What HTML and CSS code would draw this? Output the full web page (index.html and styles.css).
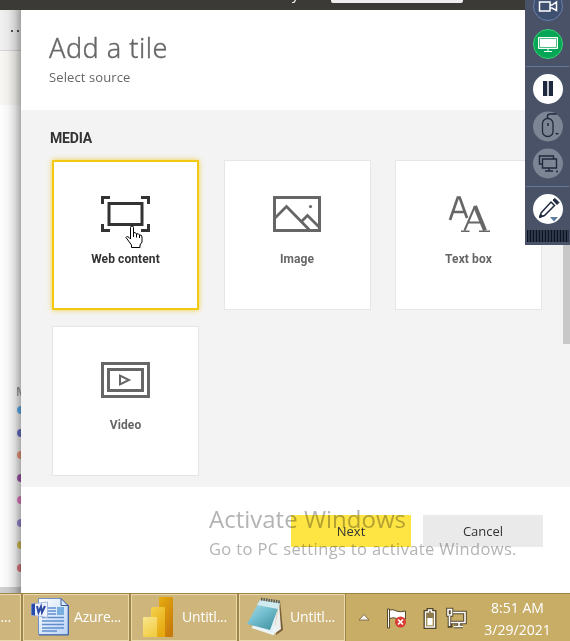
FILE: index.html
```html
<!DOCTYPE html>
<html lang="en">
<head>
<meta charset="utf-8">
<title>Add a tile</title>
<link rel="stylesheet" href="styles.css">
</head>
<body>
<div class="screen">
  <header class="topbar"><span class="topbar-text">y</span><div class="topbar-search"></div></header>
  <div class="workspace">
    <aside class="backdrop">
      <div class="backdrop-menu"><i></i><i></i></div>
      <div class="backdrop-band"></div>
      <div class="backdrop-page">
        <span class="legend-title">M</span>
        <i class="dot blue"></i><i class="dot indigo"></i><i class="dot orange"></i><i class="dot purple"></i>
        <i class="dot pink"></i><i class="dot violet"></i><i class="dot olive"></i><i class="dot red"></i>
      </div>
      <div class="backdrop-foot"></div>
    </aside>
    <main class="panel">
      <div class="panel-head">
        <h1>Add a tile</h1>
        <p>Select source</p>
      </div>
      <div class="panel-body">
        <h2>MEDIA</h2>
        <div class="tiles">
          <div class="tile selected">
            <svg width="49" height="36" viewBox="0 0 49 36" fill="none" stroke="currentColor" stroke-width="3"><path d="M1.500 8V1.500H9M40 1.500h7.500V8M1.500 28v6.500H9M40 34.500h7.500V28"/><rect x="8" y="7.500" width="33" height="21"/></svg>
            <span>Web content</span>
          </div>
          <div class="tile">
            <svg width="48" height="36" viewBox="0 0 48 36" fill="none" stroke="currentColor" stroke-width="3"><rect x="1.500" y="1.500" width="45" height="33"/><path d="M2 22 13.500 10.500 36.500 34M28.500 25.500 34.500 19.500 46 31" stroke-width="2.700"/><circle cx="37.500" cy="10.500" r="1.600" fill="currentColor" stroke="none"/></svg>
            <span>Image</span>
          </div>
          <div class="tile">
            <svg width="48" height="36" viewBox="0 0 48 36" fill="none" stroke="currentColor"><path d="M5 24 12.800 1.500h1.900L22 22M8 16h11.500" stroke-width="2.700"/><path d="M19.500 34.500 30 10M23 26.500H36" stroke-width="2"/><path d="M30 10 40 34.500" stroke-width="4"/><path d="M16 35.200h8.500M34 35.200h11" stroke-width="1.600"/></svg>
            <span>Text box</span>
          </div>
          <div class="tile">
            <svg width="49" height="36" viewBox="0 0 49 36" fill="none" stroke="currentColor" stroke-width="3"><rect x="1.500" y="1.500" width="46" height="33"/><rect x="7.500" y="7.500" width="34" height="21"/><path d="M19 13.500v9L28 18z" stroke-width="2"/></svg>
            <span>Video</span>
          </div>
        </div>
      </div>
      <div class="panel-foot">
        <button class="btn primary">Next</button>
        <button class="btn">Cancel</button>
      </div>
      <div class="scroll-thumb"></div>
    </main>
  </div>
  <footer class="taskbar">
    <div class="task cut"><span>o...</span></div>
    <div class="task">
      <svg width="40" height="40" viewBox="0 0 40 40"><defs><linearGradient id="pg" x2="1" y2="1"><stop stop-color="#fff"/><stop offset="1" stop-color="#b9d3f6"/></linearGradient></defs><path d="M8.500 1.500H31l7 7v29H8.500z" fill="url(#pg)" stroke="#6f8fc8"/><path d="M38.500 8v30H9" fill="none" stroke="#4264a8"/><path d="M31 1.500v7h7z" fill="#dbe8fb" stroke="#3c5c98"/><path d="M18 11h8M18 14h8M18 17h8M12 20.500h22M12 24h22M12 27.500h22M12 31h22M12 34h15" stroke="#5f8dce" stroke-width="1.300"/><rect x="27" y="10" width="7" height="8" fill="#79afe0"/><path d="m1.500 7 16-2v15.500L1.500 18z" fill="#eef3fd" stroke="#a9b9dc"/><path d="M1.500 7 5 6.500v12L1.500 18z" fill="#284bab"/><path d="m7 9 1.500 6.500 2.500-6 1 6L15 9" fill="none" stroke="#2e4ba3" stroke-width="2"/></svg>
      <span>Azure...</span>
    </div>
    <div class="task">
      <svg width="40" height="40" viewBox="0 0 40 40"><defs><linearGradient id="b1" x2=".6" y2="1"><stop stop-color="#e6ad10"/><stop offset="1" stop-color="#c87b0c"/></linearGradient><linearGradient id="b2" x2=".6" y2="1"><stop stop-color="#f5d24e"/><stop offset="1" stop-color="#e6a90f"/></linearGradient><linearGradient id="b3" x2=".5" y2="1"><stop stop-color="#f9e68c"/><stop offset="1" stop-color="#f2ce48"/></linearGradient></defs><rect x="21" width="14" height="40" rx="1" fill="url(#b1)"/><path d="M14 10h12q1 0 1 1v29H13V11z" fill="url(#b2)"/><rect x="5" y="20" width="14" height="20" rx="1" fill="url(#b3)"/></svg>
      <span>Untitl...</span>
    </div>
    <div class="task">
      <svg width="40" height="40" viewBox="0 0 40 40"><defs><linearGradient id="nt" x2=".8" y2="1"><stop stop-color="#b5e1e8"/><stop offset=".5" stop-color="#75bfd0"/><stop offset="1" stop-color="#3f929f"/></linearGradient></defs><path d="m34 4 3 29-7 5z" fill="#775d35"/><path d="m33 5 2 27-7 5z" fill="#eee"/><path d="m26 14 6-7-4 30-22-7z" fill="#e4f0f4"/><path d="M14 3 34 6 24 33 1 27z" fill="url(#nt)"/><path d="m14 3 20 3-2 6-21-4z" fill="#d0eaf0"/><path d="m15 2 19 3" stroke="#515b5e" stroke-width="3" stroke-dasharray="1.500 1"/><path d="m6 30 21 7 3-8" fill="none" stroke="#edf6f7" stroke-width="2"/></svg>
      <span>Untitl...</span>
    </div>
    <div class="tray">
      <svg width="110" height="26" viewBox="0 0 110 26">
        <path d="M2 16 7 10.500 12 16z" fill="#f5f2e9" stroke="#6e603d" stroke-width=".8"/>
        <g fill="#fff" stroke="#54462a" stroke-width="1"><path d="M30.500 5h2v19h-2z"/><path d="M32.500 6q4-1 7 1 3 1.500 9 0v8q-5 2-9-.5-3-1.500-7 0z"/></g>
        <circle cx="43.500" cy="18" r="5.500" fill="#d73b32"/><path d="m41 15.500 5 5m0-5-5 5" stroke="#fff" stroke-width="1.700"/>
        <g fill="none"><path d="M71 5.500h4v2h3v16H68v-16h3z" stroke="#54462a" stroke-width="3"/><path d="M71.500 6h3v2h3v15h-9V8h3z" stroke="#fff" stroke-width="1.300"/><path d="M69.500 9h7v5h-7z" fill="#8d7b4c"/><path d="M70.500 14h5v7h-5z" fill="#fff"/>
        <path d="M96 8.500h12v10H94M102 19v4M97 22.500h9M92.500 12v10h3M91 5.500h3.500V11H91z" stroke="#54462a" stroke-width="3.600"/><path d="M96 8.500h12v10H94M102 19v4M97 22.500h9M92.500 12v10M91 5.500h3.500V11H91z" stroke="#fff" stroke-width="1.600"/></g>
      </svg>
      <div class="clock"><span class="time">8:51 AM</span><span class="date">3/29/2021</span></div>
    </div>
  </footer>

  <div class="watermark"><div class="wm-title">Activate Windows</div><div class="wm-text">Go to PC settings to activate Windows.</div></div>

  <svg class="cursor" width="18" height="24" viewBox="0 0 18 24"><path d="M5.500 14V2.500Q5.500 1 7 1t1.500 1.500V8q2-1.500 3 1 2-1 3 1 2.500-.5 2.500 2v5l-2 3v2.500H6.500V20L1 12.500q1-2.500 4.500 1.500M8.500 8v4m3-3v3.500m3-2.500v3" fill="#fff" stroke="#000"/></svg>

  <svg class="recorder" width="45" height="245" viewBox="0 0 45 245" fill="none">
    <path d="M0 0h45v245H0z" fill="#495266"/>
    <path d="M1 66.500h43M1 186.500h43" stroke="#66789a"/>
    <circle cx="23" cy="6" r="14.500" fill="#3f4f70" stroke="#6781b1"/>
    <path d="M14.500 2h10.500v9H14.500zM25.500 5h1.500l4.500-3v8.500L27 8h-1.500" stroke="#fff" stroke-width="1.500"/>
    <circle cx="23" cy="44" r="14.500" fill="#07a657" stroke="#35d173"/>
    <path d="M13.500 37.500h19v11h-19z" fill="#fff" stroke="#fff"/><path d="M14.500 38.500h17v9h-17z" stroke="#50bd87"/><path d="M19 51.500h8M23 49v2" stroke="#fff"/>
    <circle cx="23" cy="89" r="15" fill="#fff"/><path d="M18 81h4v15h-4zM24 81h4v15h-4z" fill="#1f293e"/><path d="M23 81v15" stroke="#8c93a0"/>
    <circle cx="23" cy="126.500" r="15" fill="#7b8594"/>
    <rect x="17.500" y="118.500" width="10.500" height="18" rx="5" stroke="#202a3c" stroke-width="1.300"/><path d="M22.500 118v-2q0-2 3-2h6M23 123v3" stroke="#202a3c" stroke-width="1.500"/><path d="M30 133h4l-2 2z" fill="#202a3c"/>
    <circle cx="23" cy="163.500" r="15" fill="#7b8594"/>
    <path d="M17 164h-2.500v-8h14v3M17.500 159h14v9h-14zM24 168v3M20 171h8M31 171.500h2" stroke="#202a3c" stroke-width="1.400"/>
    <circle cx="23" cy="209" r="15" fill="#fff"/>
    <path d="m16 213 10-11 3.500 3.500-10 10-4.500 1.500z" stroke="#1f2940" stroke-width="1.500"/><path d="m28 200 2-1.500 4 4-2 2zM14.500 217l1-3 2.500 2.500z" fill="#1f2940" stroke="#1f2940"/><path d="M25 217h8l-4 4.500z" fill="#5c7ca4"/>
    <path d="M2 236h42" stroke="#252f40" stroke-width="12"/><path d="M2 236h42" stroke="#0b1420" stroke-width="12" stroke-dasharray="1.500 1.500"/><path d="M3.500 236h40" stroke="#465367" stroke-width="12" stroke-dasharray=".7 2.300"/>
  </svg>
</div>
</body>
</html>
```

FILE: styles.css
```css
* { box-sizing: border-box; }
body { margin: 0; font-family: "Open Sans", "Noto Sans", sans-serif; }
.screen { position: relative; width: 570px; height: 641px; overflow: hidden; display: flex; flex-direction: column; background: #fff; }
.topbar { height: 10px; background: #3b3a37; display: flex; justify-content: flex-end; overflow: hidden; }
.topbar-text { color: #fff; font-size: 14px; line-height: 14px; margin: -13px 32px 0 0; }
.topbar-search { width: 132px; height: 3px; margin-right: 107px; background: #eee; border-radius: 0 0 2px 2px; }
.workspace { height: 583px; display: flex; }
.backdrop { position: relative; width: 21px; display: flex; flex-direction: column; overflow: hidden; background: #fff; }
.backdrop::after { content: ""; position: absolute; inset: 0; background: linear-gradient(90deg, rgba(0,0,0,0) 0%, rgba(0,0,0,.04) 38%, rgba(0,0,0,.13) 68%, rgba(0,0,0,.33) 100%); }
.backdrop-menu { height: 41px; background: #f2f2f2; border-bottom: 1px solid #d8d8d8; display: flex; gap: 4px; padding: 20px 0 0 11px; }
.backdrop-menu i { flex: none; width: 2px; height: 2px; background: #555; }
.backdrop-band { height: 54px; background: #f9f8f4; }
.backdrop-page { height: 482px; padding: 279px 0 0 17px; }
.legend-title { display: block; font-size: 12px; font-weight: 600; line-height: 16px; height: 22px; color: #999; margin-left: -1px; }
.dot { display: block; width: 8px; height: 8px; border-radius: 50%; margin-bottom: 14.5px; }
.blue { background: #62b8fa; } .indigo { background: #6d77cc; } .orange { background: #f5a083; } .purple { background: #a45aaf; }
.pink { background: #ee82c6; } .violet { background: #a08ddc; } .olive { background: #dec95c; } .red { background: #ea7e8a; }
.backdrop-foot { flex: 1; background: #d2d2d2; }
.panel { position: relative; width: 549px; display: flex; flex-direction: column; background: #fff; }
.panel-head { height: 100px; padding: 20px 28px 0; color: #666; }
h1 { margin: 0; font: 300 27px/36px "Noto Sans", sans-serif; letter-spacing: .5px; -webkit-text-stroke: .35px #666; }
.panel-head p { margin: 2px 0 0; font-size: 13px; line-height: 18px; letter-spacing: .1px; }
.panel-body { height: 377px; padding: 19px 28px 0 31px; background: #f3f3f3; }
h2 { margin: 0 0 0 -2px; height: 31px; font: 700 14px/18px Roboto, sans-serif; color: #333; letter-spacing: -.2px; }
.tiles { display: grid; grid-template-columns: repeat(3, 147px); grid-auto-rows: 150px; gap: 16px 24.5px; }
.tile { display: flex; flex-direction: column; align-items: center; padding-top: 35px; background: #fff; border: 1px solid #e6e6e6; color: #666; }
.tile.selected { border: 2px solid #f2c811; padding-top: 34px; color: #333; box-shadow: 0 0 5px rgba(242,200,17,.8); }
.tile svg { flex: none; }
.tile span { margin-top: 19px; font: 700 12px/16px Roboto, sans-serif; letter-spacing: .1px; }
.panel-foot { height: 106px; display: flex; justify-content: flex-end; gap: 12px; padding: 28px 27px 0 0; }
.btn { width: 120px; height: 32px; padding: 0; border: 0; background: #eaeaea; color: #333; font: 13px/32px "Open Sans", sans-serif; }
.btn.primary { background: #ffe543; }
.scroll-thumb { position: absolute; right: 0; top: 180px; width: 7px; height: 154px; background: #c8c8c8; }
.taskbar { height: 48px; display: flex; gap: 2px; background: #c8ad67; border-top: 1px solid #9e8546; }
.task { width: 106px; display: flex; align-items: center; gap: 4px; padding: 0 0 2px 6px; background: #cdb57b; border: 1px solid #ead9ac; box-shadow: 0 0 0 1px #9d8547; color: #fff; font-size: 14px; letter-spacing: -.2px; white-space: nowrap; overflow: hidden; }
.task svg { flex: none; }
.task.cut { width: 21px; padding-left: 0; border-left: 0; justify-content: flex-end; padding-right: 9px; }
.tray { flex: 1; display: flex; padding-left: 10px; color: #fff; }
.tray svg { flex: none; margin-top: 10px; }
.clock { flex: 1; display: flex; flex-direction: column; align-items: center; font-size: 14px; line-height: 22px; padding: 3px 2px 0 0; letter-spacing: 0; }
.watermark { position: absolute; left: 209px; top: 503px; color: #b4b4b4; white-space: nowrap; mix-blend-mode: multiply; }
.wm-title { font-size: 24px; line-height: 32px; letter-spacing: 0; }
.wm-text { font-size: 16.5px; line-height: 28px; letter-spacing: .37px; }
.cursor { position: absolute; left: 125px; top: 225px; }
.recorder { position: absolute; right: 0; top: 0; }
```
